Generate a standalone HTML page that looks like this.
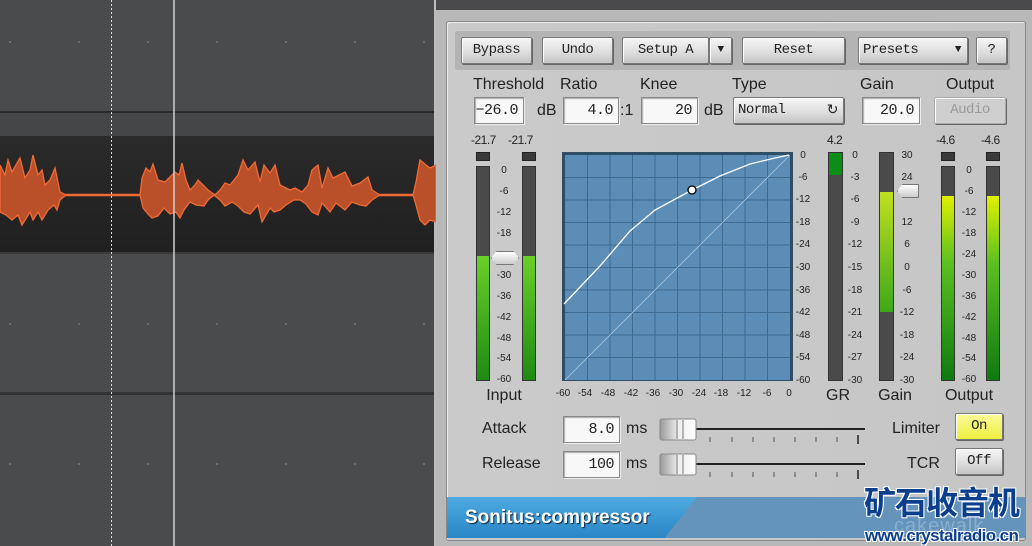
<!DOCTYPE html>
<html><head><meta charset="utf-8"><style>
*{margin:0;padding:0;box-sizing:border-box}
body{width:1032px;height:546px;overflow:hidden;background:#4a4b4d;position:relative;font-family:"Liberation Sans",sans-serif}
.a{position:absolute}
.dot{position:absolute;width:2px;height:2px;background:#6a6b6d}
.btn{position:absolute;top:37px;height:27px;background:linear-gradient(#f6f6f6,#dcdcdc 60%,#c4c4c4);border:1px solid #777;border-radius:2px;box-shadow:1px 1px 0 #666,inset 1px 1px 0 #fff;font-family:"Liberation Mono",monospace;font-size:14px;color:#222;text-align:center;line-height:25px;letter-spacing:-0.5px}
.lbl{position:absolute;font-size:16px;color:#222}
.box{position:absolute;height:27px;background:#f8f8f8;border:1px solid #888;box-shadow:inset 1px 1px 1px #aaa,1px 1px 0 #eee;font-family:"Liberation Mono",monospace;font-size:15px;color:#222;text-align:right;padding-right:5px;line-height:25px;letter-spacing:-0.5px}
.sc{position:absolute;font-size:10px;color:#222;letter-spacing:-0.5px}
.met{position:absolute;background:#4a4a4a;border:1px solid #333}
.cap{position:absolute;width:14px;height:9px;background:#3a3a3a;border:1px solid #222}
</style></head><body>
<!-- DAW area -->
<div class="a" style="left:0;top:111px;width:436px;height:2px;background:#2a2a2a"></div>
<div class="a" style="left:0;top:113px;width:436px;height:24px;background:#454647"></div>
<div class="a" style="left:0;top:136px;width:436px;height:2px;background:#2a2a2a"></div>
<div class="a" style="left:0;top:138px;width:436px;height:115px;background:linear-gradient(#2a2a2a,#202020)"></div>
<div class="a" style="left:0;top:252px;width:436px;height:2px;background:#3a3a3a"></div>
<div class="a" style="left:0;top:392px;width:436px;height:3px;background:#333"></div>
<div class="a" style="left:434px;top:0;width:3px;height:546px;background:#bbb"></div>
<div class="dot" style="left:9px;top:41px"></div><div class="dot" style="left:78px;top:41px"></div><div class="dot" style="left:147px;top:41px"></div><div class="dot" style="left:216px;top:41px"></div><div class="dot" style="left:285px;top:41px"></div><div class="dot" style="left:354px;top:41px"></div><div class="dot" style="left:423px;top:41px"></div>
<div class="dot" style="left:9px;top:323px"></div><div class="dot" style="left:78px;top:323px"></div><div class="dot" style="left:147px;top:323px"></div><div class="dot" style="left:216px;top:323px"></div><div class="dot" style="left:285px;top:323px"></div><div class="dot" style="left:354px;top:323px"></div><div class="dot" style="left:423px;top:323px"></div>
<div class="dot" style="left:9px;top:463px"></div><div class="dot" style="left:78px;top:463px"></div><div class="dot" style="left:147px;top:463px"></div><div class="dot" style="left:216px;top:463px"></div><div class="dot" style="left:285px;top:463px"></div><div class="dot" style="left:354px;top:463px"></div><div class="dot" style="left:423px;top:463px"></div>
<svg class="a" style="left:0;top:0" width="436" height="546">
<line x1="0" y1="195" x2="436" y2="195" stroke="#f06a35" stroke-width="2.5"/>
<path d="M0,165 5,175 8,160 12,172 20,158 25,178 30,170 33,155 38,175 42,170 45,185 50,180 55,168 60,192 66,195 140,195 142,178 146,168 150,172 153,164 158,180 165,182 170,177 175,172 179,175 182,163 186,180 190,190 195,185 198,180 203,185 208,190 215,195 220,190 225,183 230,185 238,175 243,160 248,170 255,162 260,182 264,165 270,173 275,165 280,185 290,190 295,188 302,192 308,185 312,170 318,165 322,188 328,168 333,178 345,172 352,186 360,183 368,177 372,190 380,195 413,195 416,182 420,160 426,165 430,168 436,165 436,222 430,220 425,225 420,220 416,205 413,195 380,195 372,200 366,206 360,205 352,202 345,210 336,203 330,212 322,203 318,215 312,212 306,204 300,200 294,200 286,205 280,210 274,212 270,208 262,222 258,205 250,214 244,212 238,206 232,202 225,206 220,200 214,195 208,200 204,206 196,205 190,202 184,210 180,218 176,212 170,214 164,208 158,216 152,218 148,214 143,208 140,195 66,195 60,200 57,210 54,205 48,210 42,220 38,212 33,220 30,212 22,225 18,215 12,220 6,215 0,212Z" fill="#b9502a" stroke="#f06a35" stroke-width="1.3"/>
<line x1="111.5" y1="0" x2="111.5" y2="546" stroke="#ddd" stroke-width="1" stroke-dasharray="2,2"/>
<line x1="174" y1="0" x2="174" y2="546" stroke="#cfcfcf" stroke-width="1.5"/>
</svg>

<!-- Plugin -->
<div class="a" style="left:436px;top:0;width:596px;height:10px;background:#4a4a4c"></div>
<div class="a" style="left:436px;top:10px;width:596px;height:536px;background:#b8b8b8"></div>
<div class="a" style="left:446px;top:21px;width:580px;height:520px;background:linear-gradient(90deg,#cacaca,#c6c6c6);border:1px solid #888;border-radius:3px;box-shadow:inset 1px 1px 0 #eee"></div>
<div class="a" style="left:455px;top:31px;width:555px;height:39px;background:#b4b4b4;border-radius:2px"></div>
<div class="btn" style="left:461px;width:71px">Bypass</div>
<div class="btn" style="left:542px;width:71px">Undo</div>
<div class="btn" style="left:622px;width:87px">Setup A</div>
<div class="btn" style="left:709px;width:23px;font-size:11px">▼</div>
<div class="btn" style="left:742px;width:103px">Reset</div>
<div class="btn" style="left:858px;width:110px;text-align:left;padding-left:4px">Presets<span style="position:absolute;right:6px;font-size:11px">▼</span></div>
<div class="btn" style="left:976px;width:31px">?</div>

<div class="lbl" style="left:473px;top:76px">Threshold</div>
<div class="lbl" style="left:560px;top:76px">Ratio</div>
<div class="lbl" style="left:640px;top:76px">Knee</div>
<div class="lbl" style="left:732px;top:76px">Type</div>
<div class="lbl" style="left:860px;top:76px">Gain</div>
<div class="lbl" style="left:946px;top:76px">Output</div>
<div class="box" style="left:474px;top:97px;width:50px">−26.0</div>
<div class="lbl" style="left:537px;top:102px">dB</div>
<div class="box" style="left:563px;top:97px;width:56px">4.0</div>
<div class="lbl" style="left:620px;top:102px">:1</div>
<div class="box" style="left:641px;top:97px;width:57px">20</div>
<div class="lbl" style="left:704px;top:102px">dB</div>
<div class="btn" style="left:733px;top:97px;width:111px;text-align:left;padding-left:4px">Normal<span style="position:absolute;right:5px;font-family:'DejaVu Sans';font-size:14px">↻</span></div>
<div class="box" style="left:862px;top:97px;width:58px">20.0</div>
<div class="btn" style="left:934px;top:97px;width:72px;color:#999;background:#cfcfcf;border-color:#aaa">Audio</div>

<div class="sc" style="left:471px;top:133px;font-size:12px">-21.7</div>
<div class="sc" style="left:508px;top:133px;font-size:12px">-21.7</div>
<div class="sc" style="left:827px;top:133px;font-size:12px">4.2</div>
<div class="sc" style="left:936px;top:133px;font-size:12px">-4.6</div>
<div class="sc" style="left:981px;top:133px;font-size:12px">-4.6</div>
<div class="cap" style="left:476px;top:152px"></div><div class="cap" style="left:522px;top:152px"></div>
<div class="cap" style="left:941px;top:152px"></div><div class="cap" style="left:986px;top:152px"></div>
<div class="met" style="left:476px;top:166px;width:14px;height:215px;background:linear-gradient(#4a4a4a 0,#4a4a4a 89px,#6ad028 89px,#1e8a12 100%)"></div>
<div class="met" style="left:522px;top:166px;width:14px;height:215px;background:linear-gradient(#4a4a4a 0,#4a4a4a 89px,#6ad028 89px,#1e8a12 100%)"></div>
<div class="met" style="left:941px;top:166px;width:14px;height:215px;background:linear-gradient(#4a4a4a 0,#4a4a4a 29px,#e0f000 29px,#5cc020 45%,#0e7a10 100%)"></div>
<div class="met" style="left:986px;top:166px;width:14px;height:215px;background:linear-gradient(#4a4a4a 0,#4a4a4a 29px,#e0f000 29px,#5cc020 45%,#0e7a10 100%)"></div>
<div class="met" style="left:828px;top:152px;width:15px;height:229px;background:linear-gradient(#0e8c1a 0,#0e8c1a 22px,#4a4a4a 22px)"></div>
<div class="met" style="left:879px;top:152px;width:15px;height:229px;background:linear-gradient(#4a4a4a 0,#4a4a4a 39px,#c0e020 39px,#3ea818 70%,#0e7a10 115px,#4a4a4a 115px)"></div>
<div class="a" style="left:491px;top:251px;width:28px;height:14px;background:linear-gradient(#fff,#ccc);border:1px solid #777;clip-path:polygon(20% 0,80% 0,100% 50%,80% 100%,20% 100%,0 50%)"></div>
<div class="a" style="left:897px;top:184px;width:22px;height:14px;background:linear-gradient(#fff,#ccc);border:1px solid #777;clip-path:polygon(25% 0,100% 0,100% 100%,25% 100%,0 50%)"></div>

<svg class="a" style="left:0;top:0" width="1032" height="546" font-family="Liberation Sans" font-size="10" fill="#222">
<g text-anchor="middle">
<text x="504" y="173">0</text><text x="504" y="194">-6</text><text x="504" y="215">-12</text><text x="504" y="236">-18</text><text x="504" y="278">-30</text><text x="504" y="299">-36</text><text x="504" y="320">-42</text><text x="504" y="341">-48</text><text x="504" y="361">-54</text><text x="504" y="382">-60</text>
<text x="969" y="173">0</text><text x="969" y="194">-6</text><text x="969" y="215">-12</text><text x="969" y="236">-18</text><text x="969" y="257">-24</text><text x="969" y="278">-30</text><text x="969" y="299">-36</text><text x="969" y="320">-42</text><text x="969" y="341">-48</text><text x="969" y="361">-54</text><text x="969" y="382">-60</text>
<text x="855" y="158">0</text><text x="855" y="180">-3</text><text x="855" y="202">-6</text><text x="855" y="225">-9</text><text x="855" y="247">-12</text><text x="855" y="270">-15</text><text x="855" y="293">-18</text><text x="855" y="315">-21</text><text x="855" y="338">-24</text><text x="855" y="360">-27</text><text x="855" y="383">-30</text>
<text x="907" y="158">30</text><text x="907" y="180">24</text><text x="907" y="225">12</text><text x="907" y="247">6</text><text x="907" y="270">0</text><text x="907" y="293">-6</text><text x="907" y="315">-12</text><text x="907" y="338">-18</text><text x="907" y="360">-24</text><text x="907" y="383">-30</text>
<text x="803" y="158">0</text><text x="803" y="180">-6</text><text x="803" y="202">-12</text><text x="803" y="225">-18</text><text x="803" y="247">-24</text><text x="803" y="270">-30</text><text x="803" y="293">-36</text><text x="803" y="315">-42</text><text x="803" y="338">-48</text><text x="803" y="360">-54</text><text x="803" y="383">-60</text>
<text x="563" y="396">-60</text><text x="585" y="396">-54</text><text x="608" y="396">-48</text><text x="631" y="396">-42</text><text x="653" y="396">-36</text><text x="676" y="396">-30</text><text x="699" y="396">-24</text><text x="721" y="396">-18</text><text x="744" y="396">-12</text><text x="767" y="396">-6</text><text x="789" y="396">0</text>
</g>
<g font-size="16" text-anchor="middle">
<text x="504" y="400">Input</text><text x="838" y="400">GR</text><text x="895" y="400">Gain</text><text x="969" y="400">Output</text>
</g>
<rect x="562" y="152" width="231" height="229" fill="#2e4d66"/>
<rect x="565" y="155" width="225" height="225" fill="#5b8db6"/>
<g stroke="#3e6a90" stroke-width="1">
<path d="M587.5 155V380M610 155V380M632.5 155V380M655 155V380M677.5 155V380M700 155V380M722.5 155V380M745 155V380M767.5 155V380M565 177.5H790M565 200H790M565 222.5H790M565 245H790M565 267.5H790M565 290H790M565 312.5H790M565 335H790M565 357.5H790"/>
</g>
<line x1="565" y1="380" x2="790" y2="155" stroke="#a9c4da" stroke-width="0.8"/>
<path d="M564 304 L600 266 L630 231 L655 210 L692 190 L720 176 L750 164 L775 158 L789 155" fill="none" stroke="#fff" stroke-width="1.3"/>
<circle cx="692" cy="190" r="4" fill="#fff" stroke="#000" stroke-width="1.3"/>
</svg>

<div class="lbl" style="left:482px;top:420px">Attack</div>
<div class="lbl" style="left:482px;top:455px">Release</div>
<div class="box" style="left:563px;top:416px;width:57px">8.0</div>
<div class="box" style="left:563px;top:451px;width:57px">100</div>
<div class="lbl" style="left:626px;top:420px">ms</div>
<div class="lbl" style="left:626px;top:455px">ms</div>
<svg class="a" style="left:655px;top:412px" width="230" height="70">
<line x1="30" y1="17" x2="210" y2="17" stroke="#222" stroke-width="2"/>
<line x1="30" y1="52" x2="210" y2="52" stroke="#222" stroke-width="2"/>
<g stroke="#555"><path d="M55 25v5M77 25v5M98 25v5M119 25v5M140 25v5M161 25v5M182 25v5"/><path d="M55 60v5M77 60v5M98 60v5M119 60v5M140 60v5M161 60v5M182 60v5"/><path d="M203 23v9M203 58v9" stroke="#222" stroke-width="1.5"/></g>
<rect x="5" y="7" width="36" height="21" rx="2" fill="url(#g)" stroke="#888"/>
<rect x="5" y="42" width="36" height="21" rx="2" fill="url(#g)" stroke="#888"/>
<path d="M22 8v19M28 8v19M22 43v19M28 43v19" stroke="#777"/>
<defs><linearGradient id="g" x1="0" x2="1"><stop offset="0" stop-color="#999"/><stop offset=".5" stop-color="#eee"/><stop offset="1" stop-color="#fff"/></linearGradient></defs>
</svg>
<div class="lbl" style="left:892px;top:420px">Limiter</div>
<div class="lbl" style="left:907px;top:455px">TCR</div>
<div class="btn" style="left:955px;top:413px;width:48px;background:linear-gradient(#fbfb9a,#eeee40)">On</div>
<div class="btn" style="left:955px;top:448px;width:48px">Off</div>

<div class="a" style="left:447px;top:497px;width:578px;height:41px;background:#6494bc"></div>
<div class="a" style="left:447px;top:497px;width:250px;height:41px;background:linear-gradient(#4eaadf,#2a86c6);clip-path:polygon(0 0,100% 0,87% 100%,0 100%)"></div>
<div class="a" style="left:465px;top:507px;font-size:19px;font-weight:bold;color:#fff;text-shadow:1px 1px 1px #123">Sonitus:compressor</div>
<div class="a" style="left:894px;top:515px;font-size:20px;color:#8aaecb;letter-spacing:1px">cakewalk</div>
<div class="a" style="left:864px;top:481px;font-family:'Noto Sans CJK SC',sans-serif;font-size:32px;font-weight:bold;color:#0b3f8e;line-height:40px;text-shadow:1px 1px 0 #fff,-1px -1px 0 #fff,1px -1px 0 #fff,-1px 1px 0 #fff;letter-spacing:-1px">矿石收音机</div>
<div class="a" style="left:865px;top:526px;font-size:17px;font-weight:bold;color:#0b3f8e;letter-spacing:-0.6px;line-height:20px;text-shadow:1px 1px 0 #fff,-1px -1px 0 #fff,1px -1px 0 #fff,-1px 1px 0 #fff">www.crystalradio.cn</div>
</body></html>
